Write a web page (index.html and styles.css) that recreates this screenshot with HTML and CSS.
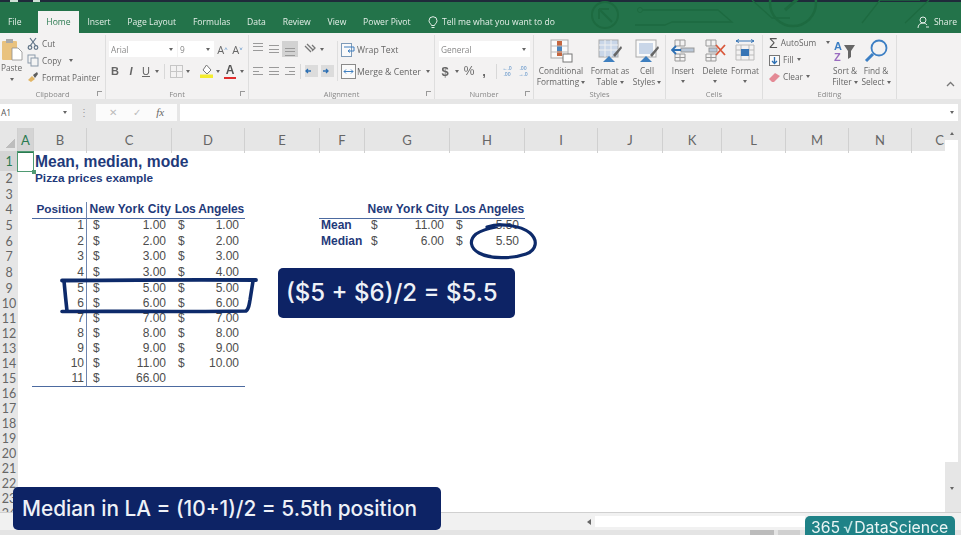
FILE: index.html
```html
<!DOCTYPE html>
<html>
<head>
<meta charset="utf-8">
<title>Mean, median, mode</title>
<link rel="stylesheet" href="styles.css">
</head>
<body>
<div class="app">

	<!-- title bar and tabs -->
	<div class="titlebar">
		<svg class="circuit" width="961" height="33" viewBox="0 0 961 33" fill="none">
			<rect x="10" y="0" width="8" height="2" fill="#cfe0d6"/>
			<rect x="33" y="0" width="7" height="2" fill="#cfe0d6"/>
			<circle cx="605" cy="15" r="13" stroke="#1d6a40" stroke-width="2"/>
			<path d="M599 9h10M599 9v10M599 9l13 13" stroke="#1d6a40" stroke-width="2"/>
			<circle cx="640" cy="10" r="2.5" stroke="#1d6a40"/>
			<path d="M643 10h75l14 12h-60l-7 3h-30M752 0l20 18h18" stroke="#1d6a40" stroke-width="1.3"/>
			<circle cx="793" cy="3" r="23" stroke="#1d6a40" stroke-width="2.5"/>
			<path d="M785 10l16-14" stroke="#1d6a40" stroke-width="3"/>
			<path d="M862 23l18-23M880 0h40M905 23l24-23" stroke="#1d6a40" stroke-width="1.3"/>
		</svg>
		<div class="tab">File</div>
		<div class="tab tab-home">Home</div>
		<div class="tab">Insert</div>
		<div class="tab">Page Layout</div>
		<div class="tab">Formulas</div>
		<div class="tab">Data</div>
		<div class="tab">Review</div>
		<div class="tab">View</div>
		<div class="tab">Power Pivot</div>
		<div class="tell">
			<svg width="10" height="13" viewBox="0 0 10 13" fill="none" stroke="#e4efe8"><path d="M3.500 9.500C3 7.500 1 7 1 4.700a4 4 0 0 1 8 0C9 7 7 7.500 6.500 9.500zM3.500 11.500h3"/></svg>
			<span>Tell me what you want to do</span>
		</div>
		<div class="share">
			<svg width="13" height="13" viewBox="0 0 13 13" fill="none" stroke="#e4efe8"><circle cx="6" cy="4" r="3"/><path d="M1 12c0-3 2-5 5-5 1.500 0 3 .6 4 2M9 11h3"/></svg>
			<span>Share</span>
		</div>
	</div>

	<!-- ribbon -->
	<div class="ribbon">

		<div class="group g-clipboard">
			<div class="group-body">
				<div class="paste">
					<svg width="22" height="23" viewBox="0 0 22 23">
						<rect x="1" y="3" width="15" height="19" rx="1" fill="#e9c27f"/>
						<rect x="5" y="1" width="7" height="4" fill="#a9a9a9"/>
						<path d="M11 10h6l4 4v8H11z" fill="#fff" stroke="#8d8d8d" stroke-width=".8"/>
					</svg>
					<span class="paste-label">Paste</span>
					<i class="caret"></i>
				</div>
				<div class="stack-sm">
					<div class="sm">
						<svg width="12" height="13" viewBox="0 0 12 13" fill="none" stroke="#5f7386" stroke-width="1.200"><path d="M3 1l6 8M9 1L3 9"/><circle cx="3" cy="10.500" r="1.800"/><circle cx="9" cy="10.500" r="1.800"/></svg>
						<span>Cut</span>
					</div>
					<div class="sm">
						<svg width="12" height="13" viewBox="0 0 12 13" fill="#f4f4f4" stroke="#8b9aaa"><rect x="1" y="1" width="7" height="8"/><rect x="4" y="4" width="7" height="8"/></svg>
						<span>Copy</span>
						<i class="caret caret-copy"></i>
					</div>
					<div class="sm">
						<svg width="12" height="13" viewBox="0 0 12 13"><path d="M1 9l4-4 3 3-4 3z" fill="#e2b565"/><path d="M6 4l4-3 1 2-3 4z" fill="#5d5d5d"/></svg>
						<span>Format Painter</span>
					</div>
				</div>
			</div>
			<div class="group-label">Clipboard<i class="launcher"></i></div>
		</div>

		<div class="group g-font">
			<div class="group-body column">
				<div class="tool-row">
					<div class="combo combo-font"><span>Arial</span><i class="caret"></i></div>
					<div class="combo combo-size"><span>9</span><i class="caret"></i></div>
					<span class="tool t15 grow-a">A<sup>^</sup></span>
					<span class="tool t15 shrink-a">A<sup>˅</sup></span>
				</div>
				<div class="tool-row row-two font-tools">
					<b class="tool t16 glyph">B</b>
					<em class="tool t16 glyph">I</em>
					<u class="tool t14 glyph">U</u>
					<span class="tool t8"><i class="caret"></i></span>
					<span class="tool-sep"></span>
					<span class="tool t16">
						<svg width="13" height="13" viewBox="0 0 13 13" fill="none" stroke="#c6c6c6"><rect x=".5" y=".5" width="12" height="12"/><path d="M6.500 0v13M0 6.500h13"/></svg>
					</span>
					<span class="tool t8"><i class="caret"></i></span>
					<span class="gap6"></span>
					<span class="tool t16">
						<svg width="13" height="14" viewBox="0 0 13 14"><path d="M6.500 1L11 6l-4 4-4-4z" fill="#fff" stroke="#777"/><rect y="10.500" width="13" height="3.500" fill="#f3ec2e"/></svg>
					</span>
					<span class="tool t8"><i class="caret"></i></span>
					<span class="tool t16 font-color">A</span>
					<span class="tool t8"><i class="caret"></i></span>
				</div>
			</div>
			<div class="group-label">Font<i class="launcher"></i></div>
		</div>

		<div class="group g-align">
			<div class="group-body align-body">
				<div class="column">
					<div class="tool-row">
						<span class="tool t16"><i class="lines lines-top"></i></span>
						<span class="tool t16"><i class="lines"></i></span>
						<span class="tool t16 selected"><i class="lines lines-bottom"></i></span>
						<span class="gap4"></span>
						<span class="tool t16">
							<svg width="12" height="12" viewBox="0 0 12 12" fill="none" stroke="#777" stroke-width="1.300"><path d="M1 3l6 6M3 1l6 6M8 2l3 3-3 3"/></svg>
						</span>
						<span class="tool t8"><i class="caret"></i></span>
					</div>
					<div class="tool-row row-two">
						<span class="tool t16"><i class="lines lines-left"></i></span>
						<span class="tool t16"><i class="lines"></i></span>
						<span class="tool t16"><i class="lines lines-right"></i></span>
						<span class="tool-sep sep-a"></span>
						<span class="tool t16 indent"><svg width="13" height="12" viewBox="0 0 13 12"><rect width="13" height="12" fill="#dcdcdc"/><path d="M1 6h5M3 4L1 6l2 2" fill="none" stroke="#2c6fb3" stroke-width="1.300"/></svg></span>
						<span class="tool t16 indent"><svg width="13" height="12" viewBox="0 0 13 12"><rect width="13" height="12" fill="#dcdcdc"/><path d="M7 6H2M5 4l2 2-2 2" fill="none" stroke="#2c6fb3" stroke-width="1.300"/></svg></span>
					</div>
				</div>
				<div class="align-wrap">
					<div class="sm sm-tight">
						<svg width="15" height="14" viewBox="0 0 15 14" fill="#fafafa" stroke="#7d9ab8"><rect x=".5" y=".5" width="10" height="13"/><path d="M3 4h10v4H7l2-1.500M7 8l2 1.500" fill="none" stroke="#3f7fc0"/></svg>
						<span>Wrap Text</span>
					</div>
					<div class="sm sm-tight">
						<svg width="15" height="15" viewBox="0 0 15 15" fill="#fafafa" stroke="#8a8a8a"><rect x=".5" y=".5" width="14" height="14"/><path d="M3 7.500h9M3 7.500l2-2M3 7.500l2 2M12 7.500l-2-2M12 7.500l-2 2" stroke="#3f7fc0" fill="none"/></svg>
						<span>Merge &amp; Center</span>
						<i class="caret caret-merge"></i>
					</div>
				</div>
			</div>
			<div class="group-label">Alignment<i class="launcher"></i></div>
		</div>

		<div class="group g-number">
			<div class="group-body column">
				<div class="combo combo-general"><span>General</span><i class="caret"></i></div>
				<div class="tool-row row-two number-tools">
					<span class="tool t12 glyph money">$</span>
					<span class="tool t12"><i class="caret"></i></span>
					<span class="tool t12 glyph percent">%</span>
					<span class="tool t18 glyph money">,</span>
					<span class="tool-sep sep-n"></span>
					<span class="tool t16 decimals"><b>←.0</b><b>.00</b></span>
					<span class="tool t16 decimals"><b>.00</b><b>→.0</b></span>
				</div>
			</div>
			<div class="group-label">Number<i class="launcher"></i></div>
		</div>

		<div class="group g-styles">
			<div class="group-body big-row">
				<div class="big b54">
					<svg width="24" height="24" viewBox="0 0 24 24">
						<rect x="2" y="1" width="17" height="18" fill="#fafafa" stroke="#a9a9a9"/>
						<rect x="8" y="2" width="5" height="5" fill="#c4663f"/>
						<rect x="8" y="7" width="5" height="5" fill="#4a83bb"/>
						<rect x="8" y="12" width="5" height="5" fill="#c4663f"/>
						<path d="M2 7h17M2 13h17" stroke="#bbb"/>
						<rect x="14" y="15" width="9" height="8" fill="#fff" stroke="#777"/>
					</svg>
					<span>Conditional</span>
					<span>Formatting <i class="caret"></i></span>
				</div>
				<div class="big b44">
					<svg width="26" height="24" viewBox="0 0 26 24">
						<rect x="2" y="1" width="19" height="17" fill="#c9d6e8" stroke="#a9a9a9"/>
						<path d="M2 6h19M2 11h19M8 1v17M14 1v17" stroke="#f1f1f1"/>
						<path d="M16 16l8-9 1 2-7 9z" fill="#666"/>
						<path d="M6 23l6-6 6 6z" fill="#3e7fbf"/>
					</svg>
					<span>Format as</span>
					<span>Table <i class="caret"></i></span>
				</div>
				<div class="big b30">
					<svg width="26" height="24" viewBox="0 0 26 24">
						<rect x="2" y="1" width="20" height="17" fill="#fafafa" stroke="#a9a9a9"/>
						<rect x="5" y="4" width="14" height="11" fill="#c9d6e8"/>
						<path d="M16 16l8-9 1 2-7 9z" fill="#666"/>
						<path d="M6 23l6-6 6 6z" fill="#3e7fbf"/>
					</svg>
					<span>Cell</span>
					<span>Styles <i class="caret"></i></span>
				</div>
			</div>
			<div class="group-label">Styles</div>
		</div>

		<div class="group g-cells">
			<div class="group-body big-row">
				<div class="big b34">
					<svg width="24" height="24" viewBox="0 0 24 24" fill="none">
						<path d="M4 1h10v6H4zM9 1v6M4 15h10v7H4zM9 15v7M4 18.500h10" stroke="#999"/>
						<rect x="10" y="9" width="13" height="4" fill="#b9c7d8" stroke="#999"/>
						<path d="M10 11H1M5 7l-4 4 4 4" stroke="#2c6fb3" stroke-width="1.800"/>
					</svg>
					<span>Insert</span>
					<i class="caret caret-big"></i>
				</div>
				<div class="big b30">
					<svg width="24" height="24" viewBox="0 0 24 24" fill="none">
						<path d="M3 1h10v6H3zM8 1v6M3 15h10v7H3zM8 15v7M3 18.500h10" stroke="#999"/>
						<rect x="6" y="9" width="8" height="4" fill="#b9c7d8" stroke="#999"/>
						<path d="M13 6l9 10M22 6l-9 10" stroke="#d9583b" stroke-width="1.800"/>
					</svg>
					<span>Delete</span>
					<i class="caret caret-big"></i>
				</div>
				<div class="big b30">
					<svg width="24" height="24" viewBox="0 0 24 24" fill="none">
						<path d="M3 6h18v15H3zM3 11h18M3 16h18M8 6v15M16 6v15" stroke="#bbb"/>
						<rect x="8" y="10" width="8" height="7" fill="#3674b5"/>
						<path d="M3 2h18M3 2l3-1.500M3 2l3 1.500M21 2l-3-1.500M21 2l-3 1.500" stroke="#3674b5"/>
					</svg>
					<span>Format</span>
					<i class="caret caret-big"></i>
				</div>
			</div>
			<div class="group-label">Cells</div>
		</div>

		<div class="group g-editing">
			<div class="group-body big-row">
				<div class="stack-edit">
					<div class="sm"><span class="sigma">Σ</span><span>AutoSum</span><i class="caret caret-auto"></i></div>
					<div class="sm">
						<svg width="11" height="12" viewBox="0 0 11 12" fill="#fafafa" stroke="#777"><rect x=".5" y="1.500" width="10" height="10"/><path d="M5.500 3v6M3 7l2.500 2.500L8 7" fill="none" stroke="#2c6fb3" stroke-width="1.300"/></svg>
						<span>Fill</span><i class="caret"></i>
					</div>
					<div class="sm">
						<svg width="11" height="12" viewBox="0 0 11 12"><path d="M0 8l6-6 5 3-6 6H3z" fill="#e48a95"/></svg>
						<span>Clear</span><i class="caret"></i>
					</div>
				</div>
				<div class="big b30">
					<svg width="24" height="24" viewBox="0 0 24 24">
						<text x="1" y="11" class="az az-a">A</text>
						<text x="1" y="22" class="az az-z">Z</text>
						<path d="M11 6h11l-4 6v6l-3 2v-8z" fill="#666"/>
					</svg>
					<span>Sort &amp;</span>
					<span>Filter <i class="caret"></i></span>
				</div>
				<div class="big b32">
					<svg width="24" height="24" viewBox="0 0 24 24" fill="none" stroke="#3c7fc4"><circle cx="15" cy="9" r="7.500" stroke-width="1.800"/><path d="M9 15l-7 7" stroke-width="3"/></svg>
					<span>Find &amp;</span>
					<span>Select <i class="caret"></i></span>
				</div>
			</div>
			<div class="group-label">Editing</div>
		</div>

		<svg class="collapse" width="9" height="6" viewBox="0 0 9 6" fill="none" stroke="#777" stroke-width="1.300"><path d="M1 5l3.500-3.500L8 5"/></svg>
	</div>

	<!-- formula bar -->
	<div class="formula">
		<div class="namebox"><span>A1</span><i class="caret"></i></div>
		<div class="dots">⋮</div>
		<div class="fx-buttons">
			<span>✕</span>
			<span>✓</span>
			<em>fx</em>
		</div>
		<div class="fx-input"><i class="caret"></i></div>
	</div>

	<!-- sheet -->
	<div class="workarea">
		<div class="sheet">
			<div class="row col-heads">
				<span class="corner"></span>
				<span class="active">A</span><span>B</span><span>C</span><span>D</span><span>E</span><span>F</span><span>G</span><span>H</span><span>I</span><span>J</span><span>K</span><span>L</span><span>M</span><span>N</span><span class="clipped">C</span>
			</div>

			<div class="row r-first"><span class="rh rh-active">1</span><span class="a1"></span><span class="title cb">Mean, median, mode</span></div>
			<div class="row r-tall"><span class="rh">2</span><span class="subtitle cb">Pizza prices example</span></div>
			<div class="row r-tall"><span class="rh">3</span></div>
			<div class="row r-tall">
				<span class="rh">4</span>
				<span class="head cb vline rule">Position</span>
				<span class="head cc rule">New York City</span>
				<span class="head cd rule">Los Angeles</span>
				<span class="head cg rule-f">New York City</span>
				<span class="head ch rule">Los Angeles</span>
			</div>
			<div class="row r-tall">
				<span class="rh">5</span><span class="num cb vline">1</span>
				<span class="acc cc"><i>$</i><i>1.00</i></span><span class="acc cd"><i>$</i><i>1.00</i></span>
				<span class="label cf">Mean</span>
				<span class="acc cg"><i>$</i><i>11.00</i></span><span class="acc ch"><i>$</i><i>5.50</i></span>
			</div>
			<div class="row r-tall">
				<span class="rh">6</span><span class="num cb vline">2</span>
				<span class="acc cc"><i>$</i><i>2.00</i></span><span class="acc cd"><i>$</i><i>2.00</i></span>
				<span class="label cf">Median</span>
				<span class="acc cg"><i>$</i><i>6.00</i></span><span class="acc ch"><i>$</i><i>5.50</i></span>
			</div>
			<div class="row r-tall"><span class="rh">7</span><span class="num cb vline">3</span><span class="acc cc"><i>$</i><i>3.00</i></span><span class="acc cd"><i>$</i><i>3.00</i></span></div>
			<div class="row r-tall"><span class="rh">8</span><span class="num cb vline">4</span><span class="acc cc"><i>$</i><i>3.00</i></span><span class="acc cd"><i>$</i><i>4.00</i></span></div>
			<div class="row"><span class="rh">9</span><span class="num cb vline">5</span><span class="acc cc"><i>$</i><i>5.00</i></span><span class="acc cd"><i>$</i><i>5.00</i></span></div>
			<div class="row"><span class="rh">10</span><span class="num cb vline">6</span><span class="acc cc"><i>$</i><i>6.00</i></span><span class="acc cd"><i>$</i><i>6.00</i></span></div>
			<div class="row"><span class="rh">11</span><span class="num cb vline">7</span><span class="acc cc"><i>$</i><i>7.00</i></span><span class="acc cd"><i>$</i><i>7.00</i></span></div>
			<div class="row"><span class="rh">12</span><span class="num cb vline">8</span><span class="acc cc"><i>$</i><i>8.00</i></span><span class="acc cd"><i>$</i><i>8.00</i></span></div>
			<div class="row"><span class="rh">13</span><span class="num cb vline">9</span><span class="acc cc"><i>$</i><i>9.00</i></span><span class="acc cd"><i>$</i><i>9.00</i></span></div>
			<div class="row"><span class="rh">14</span><span class="num cb vline">10</span><span class="acc cc"><i>$</i><i>11.00</i></span><span class="acc cd"><i>$</i><i>10.00</i></span></div>
			<div class="row"><span class="rh">15</span><span class="num cb vline rule">11</span><span class="acc cc rule"><i>$</i><i>66.00</i></span><span class="acc cd rule"></span></div>
			<div class="row"><span class="rh">16</span></div>
			<div class="row"><span class="rh">17</span></div>
			<div class="row"><span class="rh">18</span></div>
			<div class="row"><span class="rh">19</span></div>
			<div class="row"><span class="rh">20</span></div>
			<div class="row"><span class="rh">21</span></div>
			<div class="row"><span class="rh">22</span></div>
			<div class="row"><span class="rh">23</span></div>
			<div class="row"><span class="rh">24</span></div>
		</div>
		<div class="vscroll">
			<i class="caret caret-up"></i>
			<div class="thumb"></div>
			<i class="caret"></i>
		</div>
	</div>

	<!-- sheet tabs and status strip -->
	<div class="bottom">
		<div class="tabstrip">
			<span class="hs-arrow"><i class="caret caret-left"></i></span>
			<span class="hs-track"></span>
		</div>
		<div class="status">
			<span class="view view-on"></span>
			<span class="view"></span>
		</div>
	</div>

	<!-- video overlays -->
	<svg class="ink" width="961" height="535" viewBox="0 0 961 535" fill="none" stroke="#0d2a6a" stroke-linecap="round" stroke-linejoin="round">
		<path d="M62 280.500C120 280 200 279.500 256 280" stroke-width="3.800"/>
		<path d="M64 281C65 292 66 302 67 311" stroke-width="3.600"/>
		<path d="M62 311.500C120 311 190 312 246 311C249 309 249 305 250 300L253 281" stroke-width="3.600"/>
		<path d="M487 227C500 223 520 225 530 233C538 240 537 250 526 254C512 259 490 259 479 253C470 248 469 240 476 234C482 230 490 228 496 227" stroke-width="3.200"/>
	</svg>
	<div class="callout callout-sum">($5 + $6)/2 = $5.5</div>
	<div class="callout callout-median">Median in LA = (10+1)/2 = 5.5th position</div>
	<div class="logo">365<span class="logo-root">√</span>DataScience</div>
</div>
</body>
</html>
```

FILE: styles.css
```css
html, body
{
	margin: 0;
	background: #fff;
}
.app
{
	position: relative;
	width: 961px;
	height: 535px;
	overflow: hidden;
	font-family: "Open Sans", "Liberation Sans", sans-serif;
	font-size: 8.3px;
	color: #666;
	filter: blur(.45px);
}
.app i, .app em
{
	font-style: normal;
}
.caret
{
	display: inline-block;
	width: 0;
	height: 0;
	border-left: 2.500px solid transparent;
	border-right: 2.500px solid transparent;
	border-top: 3px solid #666;
	vertical-align: middle;
}

/* title bar */
.titlebar
{
	position: relative;
	display: flex;
	align-items: flex-end;
	height: 31px;
	border-top: 2px solid #1f2a3a;
	background: #23734a;
	color: #e4efe8;
	font-size: 8.600px;
}
.circuit
{
	position: absolute;
	top: -2px;
	left: 0;
}
.tab
{
	position: relative;
	display: flex;
	align-items: center;
	height: 22px;
	padding: 0 8.400px;
	box-sizing: border-box;
}
.tab:first-of-type
{
	padding-left: 8px;
	margin-right: 8px;
}
.tab-home
{
	width: 41px;
	justify-content: center;
	padding: 0;
	background: #f3f2f2;
	color: #2a7a50;
}
.tell
{
	position: relative;
	display: flex;
	align-items: center;
	gap: 4px;
	height: 22px;
	margin-left: 9px;
}
.share
{
	position: relative;
	display: flex;
	align-items: center;
	gap: 4px;
	height: 22px;
	margin-left: auto;
	padding-right: 4px;
}

/* ribbon */
.ribbon
{
	position: relative;
	display: flex;
	height: 66px;
	background: #f3f2f2;
}
.group
{
	display: flex;
	flex-direction: column;
	height: 64px;
	margin-top: 2px;
	border-right: 1px solid #dedede;
	box-sizing: border-box;
}
.group-body
{
	display: flex;
	flex: 1;
	min-height: 0;
}
.column
{
	display: flex;
	flex-direction: column;
}
.group-label
{
	position: relative;
	height: 12px;
	line-height: 14px;
	text-align: center;
	font-size: 7.500px;
	color: #888;
}
.launcher
{
	position: absolute;
	right: 3px;
	top: 4px;
	width: 4px;
	height: 4px;
	border-left: 1px solid #999;
	border-top: 1px solid #999;
}
.g-clipboard { width: 106px; }
.g-font { width: 143px; }
.g-align { width: 186px; }
.g-number { width: 99px; }
.g-styles { width: 132px; }
.g-cells { width: 97px; }
.g-editing { width: 134px; }
.paste
{
	display: flex;
	flex-direction: column;
	align-items: center;
	width: 23px;
	padding-top: 3px;
}
.paste-label
{
	margin-top: 1px;
	line-height: 12px;
}
.paste .caret
{
	margin-top: 4px;
}
.stack-sm
{
	display: flex;
	flex-direction: column;
	padding: 0 0 0 4px;
}
.sm
{
	display: flex;
	align-items: center;
	gap: 3px;
	height: 17px;
	white-space: nowrap;
}
.sm-tight
{
	gap: 1px;
}
.caret-copy { margin-left: 5px; }
.caret-merge { margin-left: 4px; }
.caret-auto { margin-left: 7px; }
.tool-row
{
	display: flex;
	align-items: center;
	height: 16px;
}
.g-font .group-body, .g-number .group-body
{
	padding-top: 6px;
}
.row-two
{
	margin-top: 6px;
}
.font-tools
{
	padding-left: 1px;
}
.number-tools
{
	padding-left: 4px;
}
.font-tools em
{
	font-style: italic;
	font-weight: bold;
}
.tool
{
	display: flex;
	align-items: center;
	justify-content: center;
	height: 16px;
	flex: none;
	color: #666;
}
.t8 { width: 8px; }
.t12 { width: 12px; }
.t14 { width: 14px; }
.t15 { width: 15px; }
.t16 { width: 16px; }
.t18 { width: 18px; }
.gap4 { width: 4px; }
.gap6 { width: 6px; }
.tool-sep
{
	width: 1px;
	height: 15px;
	margin: 0 3px 0 3px;
	background: #d8d8d8;
}
.sep-a { margin: 0 2px; }
.sep-n { margin: 0 2px 0 3px; }
.glyph
{
	font-family: "Liberation Sans", sans-serif;
	font-size: 11px;
}
.money { font-size: 13px; font-weight: bold; }
.percent { font-size: 12px; }
.combo
{
	display: flex;
	align-items: center;
	justify-content: space-between;
	box-sizing: border-box;
	height: 16px;
	padding: 0 4px 0 2px;
	background: #fff;
	font-size: 8.300px;
	color: #888;
}
.combo-font { width: 68px; margin-left: 3px; }
.combo-size { width: 36px; margin-left: 1px; }
.combo-general { width: 91px; margin-left: 4px; }
.grow-a, .shrink-a
{
	font-size: 11px;
}
.grow-a { margin-left: 1px; }
.tool sup
{
	font-size: 6px;
	color: #3f7fc0;
	line-height: 1;
}
.font-color
{
	box-sizing: border-box;
	font-size: 12px;
	font-family: "Liberation Sans", sans-serif;
	font-weight: bold;
	color: #555;
	background: linear-gradient(#e02c2c, #e02c2c) center 14px / 12px 3px no-repeat;
	padding-bottom: 3px;
}
.selected
{
	background: #d2d2d2;
}
.align-body
{
	padding: 6px 0 0 1px;
}
.lines
{
	display: block;
	width: 10px;
	height: 6px;
	border-top: 1px solid #9a9a9a;
	border-bottom: 1px solid #9a9a9a;
	background: linear-gradient(#9a9a9a, #9a9a9a) center / 100% 1px no-repeat;
}
.lines-top { margin-bottom: 5px; }
.lines-bottom { margin-top: 5px; }
.lines-left { background-size: 60% 1px; background-position: left center; }
.lines-right { background-size: 60% 1px; background-position: right center; }
.align-wrap
{
	display: flex;
	flex-direction: column;
	gap: 5px;
	margin-left: 2px;
	padding-left: 3px;
	border-left: 1px solid #dedede;
	height: 40px;
	font-size: 8.700px;
}
.decimals
{
	flex-direction: column;
	font-size: 5px;
	line-height: 6px;
	font-weight: normal;
	color: #3f7fc0;
}
.decimals b { font-weight: normal; }
.big-row
{
	padding-top: 4px;
}
.big
{
	display: flex;
	flex-direction: column;
	align-items: center;
	flex: none;
	line-height: 11px;
	white-space: nowrap;
}
.big svg
{
	margin-bottom: 2px;
}
.caret-big
{
	margin-top: 4px;
}
.b30 { width: 30px; }
.b32 { width: 32px; }
.b34 { width: 34px; }
.b44 { width: 44px; }
.b54 { width: 54px; }
.stack-edit
{
	display: flex;
	flex-direction: column;
	width: 61px;
	padding-left: 6px;
	margin-top: -5px;
}
.sigma
{
	font-size: 14px;
	font-family: "Liberation Sans", sans-serif;
	color: #555;
}
.az
{
	font-family: "Liberation Sans", sans-serif;
	font-size: 11px;
	font-weight: bold;
}
.az-a { fill: #3c7fc4; }
.az-z { fill: #9a6cc0; }
.collapse
{
	position: absolute;
	right: 6px;
	bottom: 12px;
}

/* formula bar */
.formula
{
	display: flex;
	align-items: center;
	height: 29px;
	padding: 0 3px 3px 0;
	box-sizing: border-box;
	background: #e6e6e6;
	font-size: 8.500px;
}
.namebox
{
	display: flex;
	align-items: center;
	justify-content: space-between;
	box-sizing: border-box;
	width: 72px;
	height: 17px;
	padding: 0 5px 0 1px;
	background: #fff;
	color: #555;
}
.dots
{
	width: 24px;
	text-align: center;
	color: #999;
	font-size: 10px;
}
.fx-buttons
{
	display: flex;
	align-items: center;
	justify-content: space-around;
	box-sizing: border-box;
	width: 81px;
	height: 17px;
	padding: 0 5px;
	background: #fbfbfb;
	color: #bbb;
	font-size: 10px;
}
.fx-buttons em
{
	font-family: "Liberation Serif", serif;
	font-style: italic;
	color: #666;
	font-size: 11px;
}
.fx-input
{
	display: flex;
	flex: 1;
	align-items: center;
	justify-content: flex-end;
	height: 17px;
	margin-left: 3px;
	padding-right: 4px;
	background: #fff;
}

/* sheet */
.workarea
{
	display: flex;
	height: 384px;
	background: #e6e6e6;
}
.sheet
{
	width: 945px;
	height: 384px;
	overflow: hidden;
	background: #fff;
	font-family: "Liberation Sans", sans-serif;
	font-size: 12px;
	color: #4d4d4d;
}
.row
{
	display: grid;
	grid-template-columns: 18px 16px 53px 85px 73px 75px 45px 85px 75px 73px 65px 59px 64px 63px 63px 33px;
	height: 15px;
	line-height: 15px;
	white-space: nowrap;
}
.r-first { height: 20px; line-height: 22px; }
.r-tall { height: 15.700px; line-height: 15.700px; }
.col-heads
{
	height: 23px;
	line-height: 24px;
	background: #e6e6e6;
	text-align: center;
	font-family: Lato, "Open Sans", sans-serif;
	font-size: 13px;
	color: #666;
}
.col-heads span
{
	border-right: 1px solid #d0d0d0;
	box-sizing: border-box;
}
.col-heads .active
{
	background: #d4d4d4;
	color: #2a7a50;
	border-bottom: 1px solid #2a7a50;
}
.col-heads .clipped
{
	text-align: right;
	padding-right: 1px;
	border-right: 0;
}
.corner
{
	background: linear-gradient(135deg, transparent 55%, #bdbdbd 55%) 4px 9px / 11px 11px no-repeat;
}
.rh
{
	grid-column: 1;
	background: #e6e6e6;
	text-align: center;
	font-family: Lato, "Open Sans", sans-serif;
	font-size: 12.500px;
	color: #666;
}
.rh-active
{
	background: #d4d4d4;
	color: #2a7a50;
}
.a1
{
	position: relative;
	grid-column: 2;
	margin-left: -1px;
	border: 1.500px solid #4f9a72;
	height: 21px;
	box-sizing: border-box;
}
.a1::after
{
	content: "";
	position: absolute;
	right: -3px;
	bottom: -3px;
	width: 4px;
	height: 4px;
	background: #4f9a72;
}
.cb { grid-column: 3; }
.cc { grid-column: 4; }
.cd { grid-column: 5; }
.cf { grid-column: 7; }
.cg { grid-column: 8; }
.ch { grid-column: 9; }
.title
{
	padding-left: 1px;
	font-size: 15.600px;
	font-weight: bold;
	color: #1f3a7a;
}
.subtitle
{
	padding-left: 1px;
	font-size: 11.800px;
	font-weight: bold;
	color: #1f3a7a;
}
.head
{
	box-sizing: border-box;
	padding-right: 1px;
	text-align: right;
	font-weight: bold;
	color: #1f3a7a;
}
.cb.head
{
	padding-right: 3px;
	font-size: 11.800px;
}
.cc.head, .cg.head
{
	letter-spacing: .15px;
}
.cd.head, .ch.head
{
	letter-spacing: -.15px;
}
.label
{
	padding-left: 1px;
	font-weight: bold;
	color: #1f3a7a;
}
.rule { border-bottom: 1.500px solid #4c6aa0; box-sizing: border-box; }
.cb.rule { margin-left: -2px; }
.rule-f
{
	position: relative;
	border-bottom: 1.500px solid #4c6aa0;
	box-sizing: border-box;
	margin-left: -46px;
}
.vline
{
	box-sizing: border-box;
	border-right: 1px solid #6f86b0;
}
.num
{
	padding-right: 2px;
	text-align: right;
}
.acc
{
	display: flex;
	justify-content: space-between;
	box-sizing: border-box;
	padding: 0 6px;
}
.vscroll
{
	display: flex;
	flex: 1;
	flex-direction: column;
	align-items: center;
	box-sizing: border-box;
	padding: 4px 3px 3px 0;
}
.thumb
{
	width: 13px;
	height: 322px;
	margin: 5px 0 25px;
	background: #fff;
}
.caret-up
{
	border-top: 0;
	border-bottom: 3px solid #666;
}

/* bottom strip */
.bottom
{
	height: 23px;
	background: #f1f1f1;
	border-top: 1px solid #d0d0d0;
	box-sizing: border-box;
}
.tabstrip
{
	display: flex;
	align-items: center;
	height: 17px;
	padding-left: 583px;
}
.hs-arrow
{
	display: flex;
	align-items: center;
	justify-content: center;
	width: 12px;
	height: 12px;
}
.caret-left
{
	border: 0;
	border-top: 3px solid transparent;
	border-bottom: 3px solid transparent;
	border-right: 4px solid #666;
}
.hs-track
{
	width: 210px;
	height: 11px;
	background: #fff;
}
.status
{
	display: flex;
	gap: 4px;
	height: 5px;
	padding-left: 750px;
	background: #e4e4e4;
}
.view
{
	width: 22px;
	background: #d0d0d0;
}
.view-on
{
	width: 24px;
	background: #bcbcbc;
}

/* overlays from the video */
.ink
{
	position: absolute;
	top: 0;
	left: 0;
}
.callout
{
	position: absolute;
	box-sizing: border-box;
	border-radius: 5px;
	background: #0d2365;
	color: #eef1f7;
	font-family: Inter, "Noto Sans", sans-serif;
	font-weight: 500;
	white-space: nowrap;
}
.callout-sum
{
	left: 278px;
	top: 268px;
	width: 237px;
	height: 50px;
	padding-left: 8px;
	line-height: 50px;
	font-size: 24px;
}
.callout-median
{
	left: 13px;
	top: 487px;
	width: 428px;
	height: 43px;
	padding-left: 9px;
	line-height: 43px;
	font-size: 20.800px;
}
.logo
{
	position: absolute;
	left: 805px;
	top: 516px;
	width: 150px;
	height: 19px;
	box-sizing: border-box;
	padding-left: 6px;
	border-radius: 5px 5px 0 0;
	background: #1f8287;
	color: #e9f4f4;
	font-family: Inter, "Open Sans", sans-serif;
	font-size: 15.800px;
	line-height: 23px;
	white-space: nowrap;
}
.logo-root
{
	margin: 0 1px 0 3px;
	color: #bfe3e3;
}
```
